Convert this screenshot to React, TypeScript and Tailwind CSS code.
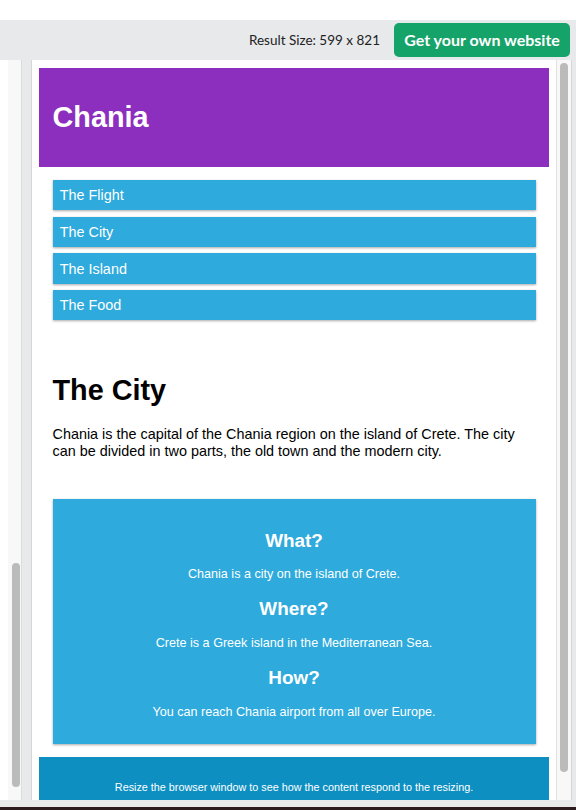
import React from 'react';

const menuItems = ['The Flight', 'The City', 'The Island', 'The Food'];

const facts = [
  { title: 'What?', text: 'Chania is a city on the island of Crete.' },
  { title: 'Where?', text: 'Crete is a Greek island in the Mediterranean Sea.' },
  { title: 'How?', text: 'You can reach Chania airport from all over Europe.' },
];

const shadow = 'shadow-[0_1px_3px_rgba(0,0,0,0.12),0_1px_2px_rgba(0,0,0,0.24)]';

// the page shown inside the result frame
const ResultPage = () => (
  <div className="px-[7px] pt-[8px] font-['Liberation_Sans',Arial,sans-serif] text-black">
    <div className="bg-[#8c2fbe] px-[13.5px] py-[13.5px] text-white">
      <h1 className="my-[19.3px] text-[28.8px] font-bold leading-[33px]">Chania</h1>
    </div>

    {/* menu */}
    <div className="p-[13.5px]">
      <ul className="flex flex-col gap-[6.3px] pb-[6.3px]">
        {menuItems.map((item) => (
          <li key={item} className={`bg-[#2eaadc] p-[7.2px] text-[14.4px] leading-[16px] text-white ${shadow}`}>
            {item}
          </li>
        ))}
      </ul>
    </div>

    {/* main */}
    <div className="px-[13.5px] py-[13.5px]">
      <h1 className="mt-[20.3px] mb-[19.3px] text-[28.8px] font-bold leading-[33px]">The City</h1>
      <p className="mb-[13px] text-[14.4px] leading-[16.5px]">
        Chania is the capital of the Chania region on the island of Crete. The city can be divided in two parts, the old town and the modern city.
      </p>
    </div>

    {/* aside */}
    <div className="px-[13.5px] pt-[13.5px] pb-[13px]">
      <div className={`bg-[#2eaadc] px-[13.5px] pt-[13.5px] pb-[11.5px] text-center text-white ${shadow}`}>
        {facts.map((f) => (
          <div key={f.title}>
            <h2 className="my-[15.7px] text-[18.9px] font-bold leading-[23px]">{f.title}</h2>
            <p className="mb-[12.6px] text-[12.6px] leading-[14.5px]">{f.text}</p>
          </div>
        ))}
      </div>
    </div>

    <div className="bg-[#0d8fc2] px-[13.5px] pt-[13.5px] pb-[13.5px] text-center text-white">
      <p className="my-[10.8px] text-[10.8px] leading-[12.5px]">
        Resize the browser window to see how the content respond to the resizing.
      </p>
    </div>
  </div>
);

export default function App() {
  return (
    <div className="h-[810px] w-[576px] overflow-hidden bg-white">
      <div className="h-[20px] bg-white" />

      {/* top bar */}
      <div className="flex h-[40px] items-center justify-end gap-[14px] bg-[#e7e9eb] pr-[6px]">
        <span className="font-['Lato',sans-serif] text-[13.5px] text-[#222]">Result Size: 599 x 821</span>
        <button className="flex h-[34px] w-[176px] items-center justify-center rounded-[5px] bg-[#16a36a] font-['Lato',sans-serif] text-[16px] font-bold text-white">
          Get your own website
        </button>
      </div>

      {/* workspace */}
      <div className="flex h-[740px]">
        <div className="w-[8px] bg-white" />
        <div className="relative w-[14px] border-r border-[#dcdcdc] bg-[#f8f8f8]">
          <div className="absolute left-[4px] top-[503px] h-[224px] w-[8px] rounded-full bg-[#bbbbbb]" />
        </div>
        <div className="w-[10px] border-r border-[#d6d6d6] bg-[#e7e9eb]" />

        {/* result frame */}
        <div className="flex w-[539px] bg-white">
          <div className="h-full w-[524px] overflow-hidden">
            <ResultPage />
          </div>
          <div className="relative w-[15px] border-l border-[#e2e2e2] bg-[#f8f8f8]">
            <div className="absolute left-[3px] top-[3px] h-[709px] w-[8px] rounded-full bg-[#bbbbbb]" />
          </div>
        </div>
        <div className="flex-1 border-l border-[#d6d6d6] bg-[#e7e9eb]" />
      </div>

      <div className="h-[7px] bg-[#e7e9eb]" />
      <div className="h-[3px] bg-[#2b1b1e]" />
    </div>
  );
}
